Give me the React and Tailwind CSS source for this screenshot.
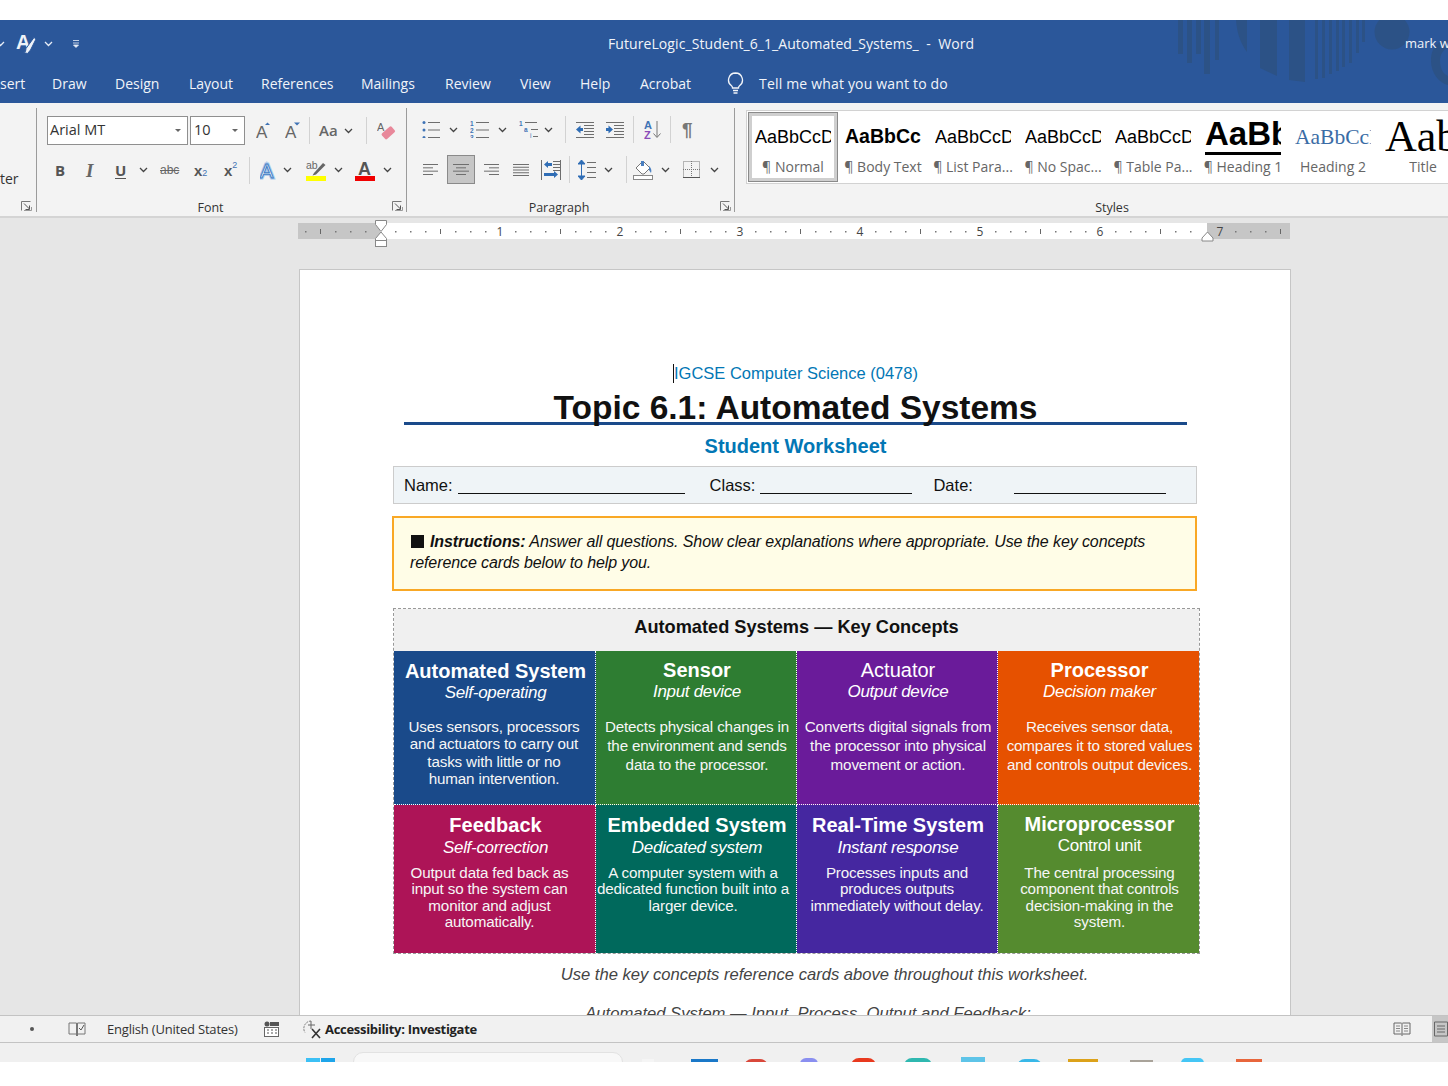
import React from "react";

const Chev = ({ className = "", c = "#444" }) => (
  <svg width="9" height="6" viewBox="0 0 9 6" className={className}>
    <path d="M1 1l3.5 3.5L8 1" stroke={c} strokeWidth="1.3" fill="none" />
  </svg>
);
const Sep = ({ className = "" }) => <div className={"w-px bg-[#d2d2d2] " + className} />;
const Launcher = ({ className = "" }) => (
  <svg width="11" height="10" viewBox="0 0 11 10" className={className}>
    <path d="M.5 9.5V.5h9" stroke="#777" fill="none" />
    <path d="M3 2.5l5.5 5.5M8.5 4.5v4h-4" stroke="#555" fill="none" />
    <path d="M3 9.5h7.5V6" stroke="#999" fill="none" />
  </svg>
);
const Lines = ({ w, ys, c = "#6e6e6e", xs = 0 }) =>
  ys.map((y, i) => <rect key={i} x={xs} y={y} width={w} height="1" fill={c} />);

const tabs = [
  ["sert", "w-[24px]"], ["Draw", "w-[35px]"], ["Design", "w-[46px]"], ["Layout", "w-[44px]"],
  ["References", "w-[72px]"], ["Mailings", "w-[56px]"], ["Review", "w-[47px]"], ["View", "w-[32px]"],
  ["Help", "w-[32px]"], ["Acrobat", "w-[53px]"],
];

const styleItems = [
  { s: "AaBbCcD", l: "¶ Normal", c: "font-['Liberation_Sans',sans-serif] text-[18px] text-black" },
  { s: "AaBbCc", l: "¶ Body Text", c: "font-['Liberation_Sans',sans-serif] font-bold text-[19.5px] text-black" },
  { s: "AaBbCcD", l: "¶ List Para...", c: "font-['Liberation_Sans',sans-serif] text-[18px] text-black" },
  { s: "AaBbCcD", l: "¶ No Spac...", c: "font-['Liberation_Sans',sans-serif] text-[18px] text-black" },
  { s: "AaBbCcD", l: "¶ Table Pa...", c: "font-['Liberation_Sans',sans-serif] text-[18px] text-black" },
  { s: "AaBbCc", l: "¶ Heading 1", c: "font-['Liberation_Sans',sans-serif] font-bold text-[33px] text-black" },
  { s: "AaBbCcI", l: "Heading 2", c: "font-['Liberation_Serif',serif] text-[21.5px] text-[#3a6ca5]" },
  { s: "Aab", l: "Title", c: "font-['Liberation_Serif',serif] text-[44px] text-black" },
];

const cards = [
  { t: "Automated System", pad: "pt-[8px]", s: "Self-operating", bg: "bg-[#1a4a8a]", cell: "border-r border-b", body: "mt-[15px] leading-[17.4px]", off: "pr-[3px]", lines: ["Uses sensors, processors", "and actuators to carry out", "tasks with little or no", "human intervention."] },
  { t: "Sensor", pad: "pt-[7px]", s: "Input device", bg: "bg-[#2e7d32]", cell: "border-r border-b", body: "mt-[15px] leading-[19px]", off: "", lines: ["Detects physical changes in", "the environment and sends", "data to the processor."] },
  { t: "Actuator", pad: "pt-[7px]", ts: "!font-normal", s: "Output device", bg: "bg-[#6a1b9a]", cell: "border-r border-b", body: "mt-[15px] leading-[19px]", off: "", lines: ["Converts digital signals from", "the processor into physical", "movement or action."] },
  { t: "Processor", pad: "pt-[7px]", s: "Decision maker", bg: "bg-[#e65100]", cell: "border-b", body: "mt-[15px] leading-[19px]", off: "", lines: ["Receives sensor data,", "compares it to stored values", "and controls output devices."] },
  { t: "Feedback", pad: "pt-[8px]", sm: "mt-px", s: "Self-correction", bg: "bg-[#ad1457]", cell: "border-r", body: "mt-[7px] leading-[16.4px]", off: "pr-[12px]", lines: ["Output data fed back as", "input so the system can", "monitor and adjust", "automatically."] },
  { t: "Embedded System", pad: "pt-[8px]", sm: "mt-px", s: "Dedicated system", bg: "bg-[#00695c]", cell: "border-r", body: "mt-[7px] leading-[16.4px]", off: "pr-[8px]", lines: ["A computer system with a", "dedicated function built into a", "larger device."] },
  { t: "Real-Time System", pad: "pt-[8px]", sm: "mt-px", s: "Instant response", bg: "bg-[#4527a0]", cell: "border-r", body: "mt-[7px] leading-[16.4px]", off: "pr-[2px]", lines: ["Processes inputs and", "produces outputs", "immediately without delay."] },
  { t: "Microprocessor", pad: "pt-[8px]", ts: "-mt-px", s: "Control unit", subPlain: true, bg: "bg-[#558b2f]", cell: "", body: "mt-[9px] leading-[16.4px]", off: "", lines: ["The central processing", "component that controls", "decision-making in the", "system."] },
];

function TitleArt() {
  const bars = [
    [1178, 34, 5], [1187, 43, 5], [1196, 34, 5], [1204, 54, 6], [1215, 40, 4],
    [1315, 59, 3], [1322, 58, 3], [1329, 54, 3], [1336, 51, 3], [1342, 47, 3], [1349, 43, 3], [1356, 33, 3], [1362, 22, 3],
  ];
  return (
    <svg width="300" height="83" viewBox="1148 20 300 83" className="absolute right-0 top-0">
      <g fill="#2c5286">
        {bars.map(([x, h, w], i) => <rect key={i} x={x} y="20" width={w} height={h} />)}
        <path d="M1236 20h11v32c-6-8-10-18-11-32z" />
        <path d="M1260 20h17v56l-17-8z" />
        <path d="M1289 20h16v62l-16-2z" />
        <circle cx="1392" cy="32" r="17.5" />
        <path fillRule="evenodd" d="M1448 40c-12 0-17 10-17 21 0 12 8 22 17 24v-9c-5-2-8-8-8-15 0-6 3-12 8-13z" />
      </g>
    </svg>
  );
}

function FontGroup() {
  return (
    <div className="relative flex h-[104px] w-[370px] flex-col border-r border-[#9b9b9b] pl-[10px]">
      <div className="mt-[8px] flex h-[29px] items-center">
        <div className="flex h-[29px] w-[141px] items-center justify-between border border-[#8f8f8f] bg-white pb-px pl-[2px] pr-[6px] text-[14.5px] text-[#333]">
          Arial MT<span className="h-0 w-0 border-x-[3.5px] border-t-[3px] border-x-transparent border-t-[#666]" />
        </div>
        <div className="ml-[2px] flex h-[29px] w-[55px] items-center justify-between border border-[#8f8f8f] bg-white pb-px pl-[3px] pr-[6px] text-[14.5px] text-[#333]">
          10<span className="h-0 w-0 border-x-[3.5px] border-t-[3px] border-x-transparent border-t-[#666]" />
        </div>
        <svg width="15" height="17" viewBox="0 0 15 17" className="ml-[11px]">
          <text x="0" y="16" fontFamily="Liberation Sans" fontSize="17" fill="#666">A</text>
          <path d="M9 3l2.5-2.5L14 3z" fill="#3f73b5" />
        </svg>
        <svg width="15" height="17" viewBox="0 0 15 17" className="ml-[14px]">
          <text x="0" y="16" fontFamily="Liberation Sans" fontSize="17" fill="#666">A</text>
          <path d="M9 .5h6L12 3.5z" fill="#3f73b5" />
        </svg>
        <Sep className="ml-[9px] h-[27px]" />
        <span className="ml-[9px] w-[20px] text-[15px] font-semibold text-[#666]">Aa</span>
        <Chev className="ml-[5px]" />
        <Sep className="ml-[13px] h-[27px]" />
        <svg width="19" height="19" viewBox="0 0 19 19" className="ml-[10px]">
          <text x="0" y="10" fontFamily="Liberation Sans" fontSize="11" fill="#666">A</text>
          <rect x="5" y="8" width="13" height="7.5" rx="1.5" transform="rotate(-42 11.5 12)" fill="#e8889a" />
        </svg>
      </div>
      <div className="mt-[12px] flex h-[26px] items-center">
        <span className="ml-[8px] w-[10px] font-['Open_Sans',sans-serif] text-[15px] font-bold leading-none text-[#555]">B</span>
        <span className="ml-[21px] w-[11px] font-['Liberation_Serif',serif] text-[19px] font-bold italic leading-none text-[#666]">I</span>
        <span className="ml-[18px] w-[11px] border-b border-[#555] text-center font-['Open_Sans',sans-serif] text-[15px] font-bold leading-[16px] text-[#555]">U</span>
        <Chev className="ml-[13px]" />
        <span className="ml-[12px] w-[21px] font-['Liberation_Sans',sans-serif] text-[12px] leading-none text-[#666] line-through">abc</span>
        <span className="ml-[13px] flex w-[15px] items-end font-['Liberation_Sans',sans-serif] text-[15px] font-bold leading-none text-[#555]">x<span className="text-[9px] font-normal text-[#3f73b5]">2</span></span>
        <span className="ml-[15px] flex w-[15px] items-start font-['Liberation_Sans',sans-serif] text-[15px] font-bold leading-none text-[#555]">x<span className="-mt-[2px] text-[9px] font-normal text-[#3f73b5]">2</span></span>
        <Sep className="ml-[10px] h-[27px]" />
        <svg width="16" height="19" viewBox="0 0 16 19" className="ml-[10px]">
          <text x="0" y="17" fontFamily="Liberation Sans" fontSize="20" fill="#fff" stroke="#a9c8ec" strokeWidth="3">A</text>
          <text x="0" y="17" fontFamily="Liberation Sans" fontSize="20" fill="#fff" stroke="#3f7cc4" strokeWidth="1">A</text>
        </svg>
        <Chev className="ml-[7px]" />
        <svg width="20" height="21" viewBox="0 0 20 21" className="ml-[14px]">
          <text x="0" y="9" fontFamily="Liberation Sans" fontSize="10.5" fill="#666">ab</text>
          <path d="M8 13l9-10 2.5 2-9.5 9.5-3.5 1z" fill="#666" />
          <rect x="0" y="16" width="20" height="5" fill="#ffff00" />
        </svg>
        <Chev className="ml-[8px]" />
        <svg width="20" height="21" viewBox="0 0 20 21" className="ml-[12px]">
          <text x="3" y="15" fontFamily="Liberation Sans" fontSize="18" fontWeight="700" fill="#555">A</text>
          <rect x="0" y="16" width="20" height="5" fill="#f00000" />
        </svg>
        <Chev className="ml-[8px]" />
      </div>
      <div className="mt-auto h-[10px] pr-[32px] text-center text-[12.5px] leading-[12px] text-[#333]">Font</div>
      <Launcher className="absolute bottom-[1px] right-[3px]" />
    </div>
  );
}

function ParaGroup() {
  const dots = [0, 7.5, 15];
  return (
    <div className="relative flex h-[104px] w-[328px] flex-col border-r border-[#9b9b9b]">
      <div className="mt-[7px] flex h-[29px] items-center">
        <svg width="18" height="17" viewBox="0 0 18 17" className="ml-[15px]">
          {dots.map((y) => <circle key={y} cx="2" cy={y + 1.5} r="1.5" fill="#3f73b5" />)}
          <Lines w="12" xs={6} ys={[1, 8.5, 16]} />
        </svg>
        <Chev className="ml-[9px]" />
        <svg width="19" height="17" viewBox="0 0 19 17" className="ml-[12px]">
          {["1", "2", "3"].map((n, i) => <text key={n} x="0" y={5 + i * 7} fontSize="6.5" fontFamily="Liberation Sans" fontWeight="700" fill="#3f73b5">{n}</text>)}
          <Lines w="13" xs={6} ys={[1, 8.5, 16]} />
        </svg>
        <Chev className="ml-[9px]" />
        <svg width="20" height="17" viewBox="0 0 20 17" className="ml-[12px]">
          <text x="0" y="5" fontSize="6.5" fontFamily="Liberation Sans" fontWeight="700" fill="#3f73b5">1</text>
          <text x="5" y="11" fontSize="6.5" fontFamily="Liberation Sans" fontWeight="700" fill="#3f73b5">a</text>
          <text x="11" y="17" fontSize="6.5" fontFamily="Liberation Sans" fill="#3f73b5">i</text>
          <rect x="6" y="1" width="12" height="1" fill="#6e6e6e" />
          <rect x="12" y="8" width="7" height="1" fill="#6e6e6e" />
          <rect x="14" y="15" width="5" height="1" fill="#6e6e6e" />
        </svg>
        <Chev className="ml-[5px]" />
        <Sep className="ml-[12px] h-[27px]" />
        <svg width="18" height="16" viewBox="0 0 18 16" className="ml-[10px]">
          <Lines w="18" ys={[0, 15]} />
          <Lines w="10" xs={8} ys={[3, 6, 9, 12]} />
          <path d="M0 7.5l4.5-4v2.5H7v3H4.500v2.500z" fill="#2f6db5" />
        </svg>
        <svg width="18" height="16" viewBox="0 0 18 16" className="ml-[12px]">
          <Lines w="18" ys={[0, 15]} />
          <Lines w="10" xs={8} ys={[3, 6, 9, 12]} />
          <path d="M7 7.500l-4.500-4V6H0v3h2.500v2.500z" fill="#2f6db5" />
        </svg>
        <Sep className="ml-[9px] h-[27px]" />
        <svg width="18" height="19" viewBox="0 0 18 19" className="ml-[10px]">
          <text x="0" y="9" fontFamily="Liberation Sans" fontSize="11" fontWeight="700" fill="#3f73b5">A</text>
          <text x="0" y="19" fontFamily="Liberation Sans" fontSize="11" fontWeight="700" fill="#8b4cb8">Z</text>
          <path d="M13 1v16M9.500 13.500L13 17.500l3.500-4" stroke="#777" fill="none" />
        </svg>
        <Sep className="ml-[8px] h-[27px]" />
        <span className="ml-[11px] font-['Liberation_Sans',sans-serif] text-[19px] font-bold leading-none text-[#777]">¶</span>
      </div>
      <div className="mt-[11px] flex h-[29px] items-center">
        <svg width="15" height="11" viewBox="0 0 15 11" className="ml-[16px]">
          <rect width="15" height="1" fill="#6e6e6e" /><rect y="3.330" width="10" height="1" fill="#6e6e6e" /><rect y="6.660" width="15" height="1" fill="#6e6e6e" /><rect y="10" width="10" height="1" fill="#6e6e6e" />
        </svg>
        <div className="ml-[9px] flex h-[29px] w-[28px] items-center justify-center border border-[#8a8a8a] bg-[#c6c6c6]">
          <svg width="16" height="11" viewBox="0 0 16 11">
            <rect width="16" height="1" fill="#6e6e6e" /><rect x="3" y="3.330" width="10" height="1" fill="#6e6e6e" /><rect y="6.660" width="16" height="1" fill="#6e6e6e" /><rect x="3" y="10" width="10" height="1" fill="#6e6e6e" />
          </svg>
        </div>
        <svg width="15" height="11" viewBox="0 0 15 11" className="ml-[9px]">
          <rect width="15" height="1" fill="#6e6e6e" /><rect x="5" y="3.330" width="10" height="1" fill="#6e6e6e" /><rect y="6.660" width="15" height="1" fill="#6e6e6e" /><rect x="5" y="10" width="10" height="1" fill="#6e6e6e" />
        </svg>
        <svg width="16" height="12" viewBox="0 0 16 12" className="ml-[14px]">
          <Lines w="16" ys={[0, 2.75, 5.5, 8.25, 11]} />
        </svg>
        <svg width="20" height="20" viewBox="0 0 20 20" className="ml-[12px]">
          <path d="M.5 0v20M19.500 0v20" stroke="#6e6e6e" />
          <Lines w="7" xs={12} ys={[1, 4, 7, 10]} />
          <path d="M3 4.500l4-3.500v2h4v3H7v2z" fill="#2f6db5" />
          <path d="M17 14.500l-4-3.500v2H3v3h10v2z" fill="#2f6db5" />
        </svg>
        <Sep className="ml-[8px] h-[27px]" />
        <svg width="19" height="20" viewBox="0 0 19 20" className="ml-[8px]">
          <path d="M3.500 0v20M0 4l3.500-4L7 4zM0 16l3.500 4L7 16z" fill="#2f6db5" stroke="#2f6db5" />
          <Lines w="9" xs={9} ys={[2, 7, 12, 17]} />
        </svg>
        <Chev className="ml-[7px]" />
        <Sep className="ml-[13px] h-[27px]" />
        <svg width="20" height="20" viewBox="0 0 20 20" className="ml-[6px]">
          <rect x=".5" y="15.500" width="19" height="4" fill="#fff" stroke="#888" />
          <path d="M3 8l7-7 7 7-6 6h-2z" fill="#fff" stroke="#777" />
          <path d="M8 1h3v5H8zM16 6c2 2 3 4 2 7l-2-3z" fill="#4a7fc0" />
        </svg>
        <Chev className="ml-[8px]" />
        <svg width="17" height="17" viewBox="0 0 17 17" className="ml-[13px]">
          <rect x=".5" y=".5" width="16" height="16" fill="none" stroke="#777" strokeDasharray="1 1" />
          <path d="M8.500 0v17M0 8.500h17" stroke="#777" strokeDasharray="1 1" />
          <path d="M0 16.500h17" stroke="#555" />
        </svg>
        <Chev className="ml-[10px]" />
      </div>
      <div className="mt-auto h-[10px] pr-[23px] text-center text-[12.5px] leading-[12px] text-[#333]">Paragraph</div>
      <Launcher className="absolute bottom-[1px] right-[3px]" />
    </div>
  );
}

function StyleGroup() {
  return (
    <div className="flex h-[104px] w-[702px] flex-col">
      <div className="mt-[2px] ml-[11px] flex h-[74px] w-[720px] overflow-hidden border border-[#d2d2d2] bg-white pl-[1px] pt-[1px]">
        {styleItems.map((it, i) => (
          <div key={i} className={i === 0 ? "h-[70px] w-[90px] shrink-0 border border-[#8a8a8a]" : "h-[70px] w-[90px] shrink-0 border border-transparent"}>
            <div className={i === 0 ? "flex h-[68px] flex-col border-[3px] border-[#cfcfcf]" : "flex h-[68px] flex-col border-[3px] border-transparent"}>
              <div className={i === 7 ? "h-[42px] overflow-hidden pl-[3px]" : "h-[42px] w-[79px] overflow-hidden pl-[3px]"}>
                <div className={i === 5 ? "flex h-[39px] w-[76px] items-center overflow-hidden border-b-[3px] border-black whitespace-nowrap " + it.c : "flex h-[42px] w-[76px] items-center overflow-hidden whitespace-nowrap " + (i === 7 ? "w-[130px] " : "") + it.c}>
                  {it.s}
                </div>
              </div>
              <div className="-mx-[3px] pt-px text-center text-[14px] leading-[22px] whitespace-nowrap text-[#666]">{it.l}</div>
            </div>
          </div>
        ))}
      </div>
      <div className="mt-auto h-[10px] pl-[52px] text-center text-[12.5px] leading-[12px] text-[#333]">Styles</div>
    </div>
  );
}

function Ruler() {
  const marks = [];
  for (let k = -5; k <= 60; k++) {
    const x = 82 + k * 15;
    if (x < 5 || x > 985) continue;
    if (k === 0 || k === 55) continue;
    if (k % 8 === 0 && k > 0) continue;
    if (k % 4 === 0) marks.push(<rect key={k} x={x} y="10" width="1" height="5" fill="#666" />);
    else marks.push(<rect key={k} x={x} y="12" width="1.500" height="1.500" fill="#777" />);
  }
  return (
    <svg width="993" height="29" viewBox="0 0 993 29" className="mt-px ml-[298px] shrink-0">
      <rect x="0" y="4" width="992" height="16" fill="#c6c6c6" />
      <rect x="82" y="4" width="827" height="16" fill="#fff" />
      {marks}
      {[1, 2, 3, 4, 5, 6, 7].map((n) => (
        <text key={n} x={82 + n * 120} y="17" textAnchor="middle" fontSize="12" fontFamily="Open Sans" fill="#444">{n}</text>
      ))}
      <path d="M77.500 1.500h11v4l-5.500 7-5.500-7z" fill="#fff" stroke="#888" />
      <path d="M83 13l5.500 6.500v2h-11v-2z" fill="#fff" stroke="#888" />
      <rect x="77.500" y="21.500" width="11" height="6" fill="#fff" stroke="#888" />
      <path d="M909.500 13l5.500 6v3h-11v-3z" fill="#fff" stroke="#888" />
    </svg>
  );
}

function Card({ c }) {
  return (
    <div className={"flex flex-col items-center border-dotted border-white pl-[2px] text-white whitespace-nowrap " + c.pad + " " + c.bg + " " + c.cell}>
      <div className={"text-[20px] font-bold leading-[24px] " + (c.ts || "")}>{c.t}</div>
      <div className={(c.subPlain ? "" : "italic ") + "text-[17px] leading-[20px] tracking-[-0.3px] " + (c.sm || "")}>{c.s}</div>
      <div className={"text-center text-[15.2px] tracking-[-0.15px] text-[#f6f6f6] " + c.body + " " + c.off}>
        {c.lines.map((l) => <div key={l}>{l}</div>)}
      </div>
    </div>
  );
}

function Page() {
  return (
    <div className="ml-[299px] mt-[21px] h-[800px] w-[992px] shrink-0 border border-[#c6c6c6] bg-white pl-[93px] pt-[91px] font-['Liberation_Sans',sans-serif] text-[#111]">
      <div className="w-[805px] text-center text-[16.5px] leading-[24px] text-[#0277b5]">
        <span className="inline-block border-l border-[#111] leading-[19px]">IGCSE Computer Science (0478)</span>
      </div>
      <div className="ml-[11px] mt-[2px] h-[38px] w-[783px] border-b-[3px] border-[#1a4a8a] text-center text-[33.5px] font-bold leading-[42px]">
        Topic 6.1: Automated Systems
      </div>
      <div className="mt-[9px] w-[805px] text-center text-[20px] font-bold leading-[24px] text-[#0277b5]">Student Worksheet</div>
      <div className="mt-[8px] flex h-[38px] w-[804px] items-center border border-[#cccccc] bg-[#eff4f7] pl-[10px] text-[16.5px]">
        <span>Name:</span>
        <span className="ml-[5px] mt-[1px] h-[16px] w-[227px] border-b border-[#111]" />
        <span className="ml-[25px]">Class:</span>
        <span className="ml-[5px] mt-[1px] h-[16px] w-[152px] border-b border-[#111]" />
        <span className="ml-[21px]">Date:</span>
        <span className="ml-[41px] mt-[1px] h-[16px] w-[152px] border-b border-[#111]" />
      </div>
      <div className="-ml-px mt-[12px] h-[75px] w-[805px] border-2 border-[#f9a825] bg-[#fffde7] pl-[16px] pt-[13px] text-[16px] italic leading-[21px] tracking-[-0.1px]">
        <div className="flex items-center whitespace-nowrap">
          <span className="ml-[1px] mr-[6px] h-[13px] w-[13px] bg-[#111]" />
          <span><b>Instructions:</b> Answer all questions. Show clear explanations where appropriate. Use the key concepts</span>
        </div>
        <div>reference cards below to help you.</div>
      </div>
      <div className="mt-[17px] w-[807px] border border-dashed border-[#999]">
        <div className="flex h-[42px] items-center justify-center bg-[#f0f0f0] pb-[4px] text-[18.2px] font-bold">Automated Systems — Key Concepts</div>
        <div className="grid grid-cols-[202px_201px_201px_201px] grid-rows-[154px_148px]">
          {cards.map((c) => <Card key={c.t} c={c} />)}
        </div>
      </div>
      <div className="mt-[9px] w-[863px] text-center text-[16.6px] italic leading-[24px] text-[#444]">Use the key concepts reference cards above throughout this worksheet.</div>
      <div className="mt-[15px] w-[830px] text-center text-[16.6px] italic leading-[24px] text-[#444]">Automated System — Input, Process, Output and Feedback:</div>
    </div>
  );
}

function Taskbar() {
  return (
    <div className="flex h-[19px] shrink-0 overflow-hidden bg-[#f0f0f0]">
      <div className="ml-[306px] mt-[15px] grid h-[12px] w-[29px] grid-cols-2 gap-[1px]"><span className="bg-[#3cc0f5]" /><span className="bg-[#1ea5ea]" /></div>
      <div className="ml-[18px] mt-[9px] h-[20px] w-[270px] rounded-t-[10px] border border-[#e2e2e2] bg-[#f8f8f8]" />
      <div className="ml-[19px] mt-[16px] h-[10px] w-[12px] bg-[#f5f5f5]" />
      <div className="ml-[37px] mt-[16px] h-[10px] w-[27px] bg-[#1a78c8]" />
      <div className="ml-[26px] mt-[16px] h-[16px] w-[24px] rounded-full bg-[#d9483b]" />
      <div className="ml-[32px] mt-[15px] h-[12px] w-[18px] rounded-t-[6px] bg-[#8a8ff0]" />
      <div className="ml-[33px] mt-[15px] h-[16px] w-[25px] rounded-full border-[4px] border-[#e8391e]" />
      <div className="ml-[28px] mt-[15px] h-[16px] w-[28px] rounded-full bg-[#2fb8b0]" />
      <div className="ml-[29px] mt-[14px] h-[12px] w-[24px] bg-[#5ec4e8]" />
      <div className="ml-[32px] mt-[16px] h-[16px] w-[25px] rounded-full bg-[#39b8e8]" />
      <div className="ml-[26px] mt-[16px] h-[10px] w-[30px] bg-[#dca21a]" />
      <div className="ml-[32px] mt-[17px] h-[8px] w-[23px] bg-[#a9a39a]" />
      <div className="ml-[28px] mt-[15px] h-[12px] w-[23px] rounded-t-[5px] bg-[#45c6f5]" />
      <div className="ml-[32px] mt-[16px] h-[10px] w-[26px] bg-[#e8663c]" />
    </div>
  );
}

export default function App() {
  return (
    <div className="flex h-[1086px] w-[1448px] flex-col overflow-hidden bg-white font-['Open_Sans',sans-serif]">
      <div className="h-[20px] shrink-0" />
      <div className="relative h-[83px] shrink-0 overflow-hidden bg-[#2b579a] text-[14px] text-[#f1f4f9]">
        <TitleArt />
        <div className="relative flex h-[47px] items-center [&>*]:shrink-0">
          <Chev className="-ml-[4px]" c="#e8eef7" />
          <svg width="21" height="21" viewBox="0 0 21 21" className="ml-[11px]">
            <text x="0" y="16" fontFamily="Liberation Sans" fontSize="20" fontWeight="700" fill="#eef2f8">A</text>
            <path d="M10 15.500l8-11 2 1.500-5.500 11-3 3.500-4-1 2-1z" fill="#eef2f8" stroke="#2b579a" strokeWidth="1" />
          </svg>
          <Chev className="ml-[7px]" c="#e8eef7" />
          <svg width="7" height="8" viewBox="0 0 7 8" className="ml-[20px]">
            <path d="M0 .5h6M0 3h6M.5 5h5L3 7.500z" stroke="#e8eef7" fill="#e8eef7" strokeWidth=".8" />
          </svg>
          <div className="ml-[528px] w-[366px] text-[14px] tracking-[0.08px] whitespace-pre">FutureLogic_Student_6_1_Automated_Systems_  -  Word</div>
          <div className="ml-[431px] text-[13px] whitespace-nowrap">mark wa</div>
        </div>
        <div className="relative flex h-[36px] items-center pb-[4px]">
          <div className="flex gap-[28px] text-[14px] whitespace-nowrap">
            {tabs.map(([t, w]) => <div key={t} className={w}>{t}</div>)}
          </div>
          <svg width="17" height="22" viewBox="0 0 17 22" className="ml-[34px]">
            <path d="M8.500 1a7 7 0 0 0-4 12.700c.7.600 1 1.300 1 2.300h6c0-1 .3-1.700 1-2.300A7 7 0 0 0 8.500 1zM6 18.500h5M6.500 21h4" stroke="#f1f4f9" strokeWidth="1.300" fill="none" />
          </svg>
          <div className="ml-[15px] whitespace-nowrap tracking-[0.18px]">Tell me what you want to do</div>
        </div>
      </div>
      <div className="flex h-[115px] shrink-0 border-b-2 border-[#d4d4d4] bg-[#f3f3f3] pt-[5px]">
        <div className="relative h-[104px] w-[37px] shrink-0 border-r border-[#9b9b9b] text-[14px] text-[#333]">
          <div className="mt-[61px] leading-[20px]">ter</div>
          <Launcher className="absolute bottom-[1px] right-[4px]" />
        </div>
        <FontGroup />
        <ParaGroup />
        <StyleGroup />
      </div>
      <div className="flex h-[797px] shrink-0 flex-col overflow-hidden bg-[#e6e6e6]">
        <Ruler />
        <Page />
      </div>
      <div className="flex h-[28px] shrink-0 items-center border-y border-[#c3c3c3] bg-[#f1f1f1] text-[13px] text-[#333]">
        <span className="ml-[30px] h-[4px] w-[4px] rounded-full bg-[#555]" />
        <svg width="18" height="16" viewBox="0 0 18 16" className="ml-[34px]">
          <path d="M8.500 2H1v11h7.500M9.500 2H17v11H9.500M8.500 2v13M9.500 2v13" stroke="#777" fill="none" />
          <path d="M11 7l2 2 3-5" stroke="#555" fill="none" />
        </svg>
        <span className="ml-[21px] w-[130px] pt-px whitespace-nowrap tracking-[-0.2px]">English (United States)</span>
        <svg width="15" height="16" viewBox="0 0 15 16" className="ml-[27px]">
          <circle cx="3" cy="3" r="2.500" fill="#555" />
          <rect x="6" y="1" width="9" height="4" fill="#555" />
          <rect x=".5" y="6.500" width="14" height="9" fill="#fff" stroke="#666" />
          <path d="M3 9h2M7 9h2M11 9h2M3 12h2M7 12h2M11 12h2" stroke="#555" />
        </svg>
        <svg width="19" height="19" viewBox="0 0 19 19" className="ml-[24px]">
          <path d="M8 1a7.500 7.500 0 0 0-6 11.500" stroke="#777" fill="none" strokeDasharray="2 1" />
          <path d="M8 1v8M5 5h7" stroke="#666" fill="none" />
          <path d="M9 9l8 9M17 9l-8 9" stroke="#333" strokeWidth="1.600" />
        </svg>
        <span className="ml-[3px] pt-px font-bold whitespace-nowrap tracking-[-0.3px] text-[#222]">Accessibility: Investigate</span>
        <svg width="18" height="16" viewBox="0 0 18 16" className="ml-auto">
          <path d="M8.500 2H1v11h7.500M9.500 2H17v11H9.500M9 2v13" stroke="#666" fill="none" />
          <path d="M3 5h4M3 7.500h4M3 10h4M11 5h4M11 7.500h4M11 10h4" stroke="#888" />
        </svg>
        <div className="ml-[21px] flex h-[26px] w-[16px] items-center justify-start bg-[#c6c6c6] pl-[2px]">
          <svg width="14" height="16" viewBox="0 0 14 16"><path d="M.5 1h13v14H.5zM3 5h8M3 8h8M3 11h8" stroke="#666" fill="none" /></svg>
        </div>
      </div>
      <Taskbar />
    </div>
  );
}
